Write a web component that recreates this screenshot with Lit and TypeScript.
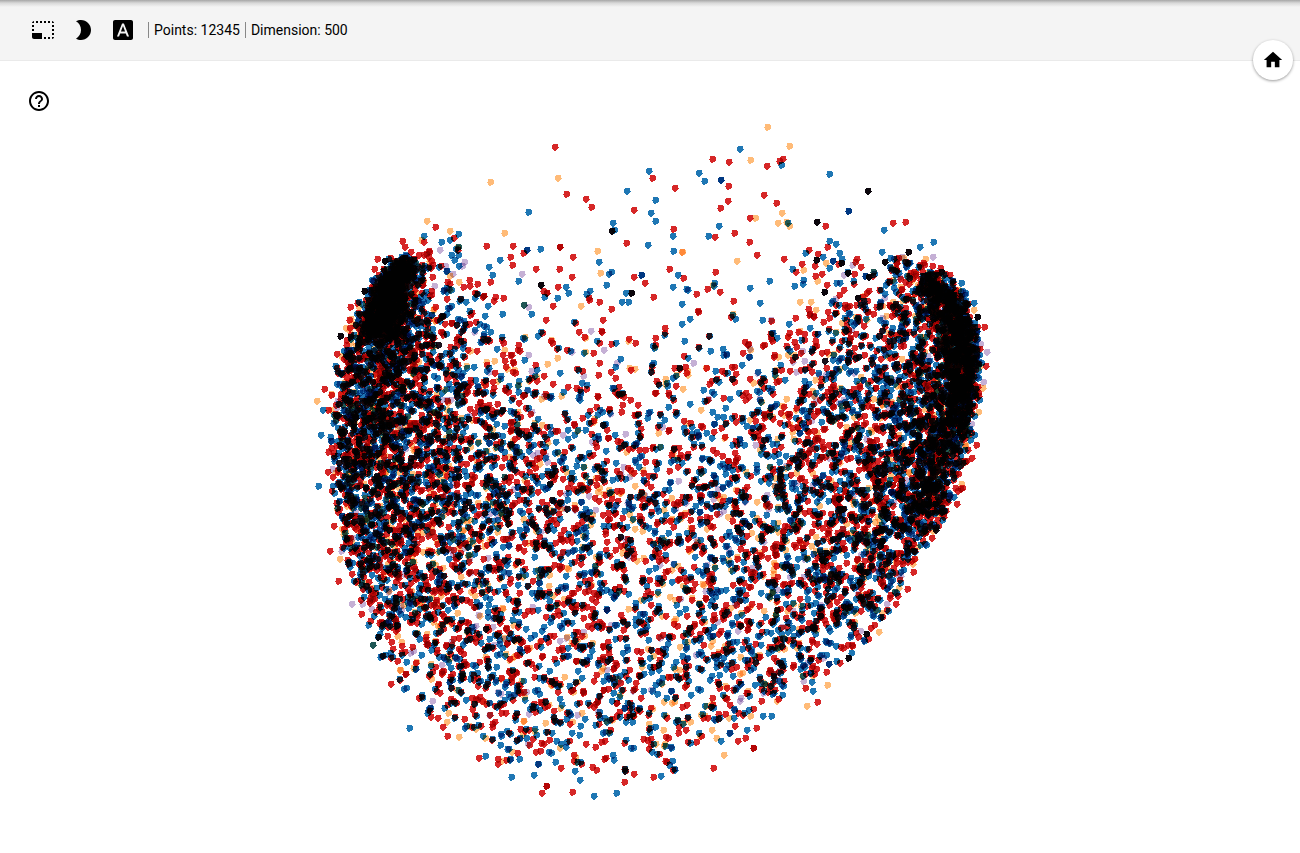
import { LitElement, html, css, svg } from "lit";
import { customElement, property, query } from "lit/decorators.js";

const ICONS = {
  labels3d:
    "M23 15h-2v2h2v-2zm0-4h-2v2h2v-2zm0 8h-2v2c1 0 2-1 2-2zM15 3h-2v2h2V3zm8 4h-2v2h2V7zm-2-4v2h2c0-1-1-2-2-2zM3 21h8v-6H1v4c0 1.1.9 2 2 2zM3 7H1v2h2V7zm12 12h-2v2h2v-2zm4-16h-2v2h2V3zm0 16h-2v2h2v-2zM3 3C2 3 1 4 1 5h2V3zm0 8H1v2h2v-2zm8-8H9v2h2V3zM7 3H5v2h2V3z",
  night:
    "M10 2c-1.82 0-3.53.5-5 1.35C7.99 5.08 10 8.3 10 12s-2.01 6.92-5 8.65C6.47 21.5 8.18 22 10 22c5.52 0 10-4.48 10-10S15.52 2 10 2z",
  font:
    "M9.93 13.5h4.14L12 7.98zM20 2H4c-1.1 0-2 .9-2 2v16c0 1.1.9 2 2 2h16c1.1 0 2-.9 2-2V4c0-1.1-.9-2-2-2zm-4.05 16.5l-1.14-3H9.17l-1.12 3H5.96l5.11-13h1.86l5.11 13h-2.09z",
  help:
    "M11 18h2v-2h-2v2zm1-16C6.48 2 2 6.48 2 12s4.48 10 10 10 10-4.48 10-10S17.52 2 12 2zm0 18c-4.41 0-8-3.59-8-8s3.59-8 8-8 8 3.59 8 8-3.59 8-8 8zm0-14c-2.21 0-4 1.79-4 4h2c0-1.1.9-2 2-2s2 .9 2 2c0 2-3 1.75-3 5h2c0-2.25 3-2.5 3-5 0-2.21-1.79-4-4-4z",
  home: "M10 20v-6h4v6h5v-8h3L12 3 2 12h3v8z",
};

const icon = (d: string) =>
  html`<svg viewBox="0 0 24 24" aria-hidden="true">${svg`<path d=${d}></path>`}</svg>`;

/* Point colours; overlapping points multiply. k, t, n and d are stacked points. */
const COLORS: Record<string, string> = {
  r: "#d62728",
  b: "#1f77b4",
  o: "#ffbb78",
  p: "#c5b0d5",
  k: "#0b060c",
  t: "#1f5755",
  n: "#003882",
  d: "#b40606",
};

/* Projection plane: cell size, first cell centre and the plane's centre. */
const CELL = 30;
const ORIGIN = { x: 330, y: 245 };
const CENTER = { x: 650, y: 457 };

/* Points per cell of the projection. */
const DENSITY: number[][] = [
  [0, 0, 6, 30, 8, 0, 0, 0, 0, 0, 0, 0, 0, 0, 0, 0, 0, 0, 0, 14, 16, 0, 0],
  [0, 10, 100, 45, 12, 4, 0, 0, 0, 0, 0, 0, 0, 0, 0, 0, 0, 0, 6, 34, 80, 15, 0],
  [5, 50, 190, 50, 18, 12, 1, 0, 0, 0, 0, 0, 0, 0, 0, 3, 10, 18, 24, 34, 80, 110, 0],
  [15, 100, 170, 60, 28, 20, 10, 7, 6, 5, 5, 5, 5, 7, 9, 15, 16, 22, 30, 40, 70, 180, 20],
  [24, 110, 120, 60, 38, 28, 15, 10, 8, 8, 8, 9, 10, 10, 11, 15, 24, 30, 36, 46, 80, 190, 25],
  [36, 115, 110, 60, 42, 34, 25, 17, 12, 13, 12, 11, 12, 13, 14, 22, 30, 36, 42, 52, 90, 170, 12],
  [40, 100, 96, 62, 46, 38, 32, 22, 15, 15, 15, 16, 17, 17, 20, 24, 32, 40, 46, 56, 100, 140, 5],
  [38, 92, 90, 60, 48, 42, 35, 27, 20, 20, 18, 18, 18, 19, 22, 27, 35, 42, 52, 70, 110, 80, 0],
  [34, 86, 80, 58, 48, 42, 36, 30, 27, 26, 24, 23, 23, 23, 27, 32, 38, 44, 56, 80, 130, 40, 0],
  [28, 76, 70, 54, 46, 40, 34, 32, 30, 30, 28, 28, 28, 28, 30, 34, 40, 48, 56, 90, 100, 10, 0],
  [15, 66, 66, 46, 40, 34, 30, 28, 26, 26, 26, 26, 26, 26, 28, 32, 40, 48, 56, 60, 36, 0, 0],
  [3, 50, 60, 42, 36, 30, 28, 26, 25, 24, 24, 24, 24, 25, 28, 34, 40, 50, 52, 36, 8, 0, 0],
  [0, 20, 50, 40, 32, 28, 26, 24, 23, 22, 22, 22, 22, 24, 28, 32, 40, 46, 40, 15, 0, 0, 0],
  [0, 5, 26, 34, 32, 28, 26, 24, 22, 22, 21, 20, 21, 25, 28, 31, 36, 34, 18, 0, 0, 0, 0],
  [0, 0, 8, 22, 28, 27, 25, 23, 23, 22, 21, 21, 22, 24, 26, 29, 30, 14, 0, 0, 0, 0, 0],
  [0, 0, 2, 12, 23, 25, 25, 22, 21, 21, 21, 21, 21, 21, 20, 18, 8, 0, 0, 0, 0, 0, 0],
  [0, 0, 0, 3, 12, 20, 22, 19, 18, 18, 17, 15, 15, 13, 9, 3, 0, 0, 0, 0, 0, 0, 0],
  [0, 0, 0, 0, 1, 6, 11, 14, 12, 9, 8, 9, 8, 4, 0, 0, 0, 0, 0, 0, 0, 0, 0],
];

/* Outline of the dense part of the cloud. */
const HULL: number[][] = [
  [425, 237], [395, 255], [370, 285], [353, 322], [341, 360], [332, 400], [328, 460], [334, 520],
  [350, 575], [368, 625], [390, 670], [410, 700], [445, 718], [480, 752], [515, 768], [560, 770],
  [600, 770], [660, 777], [700, 757], [742, 730], [765, 708], [812, 692], [840, 660], [880, 625],
  [908, 585], [926, 540], [953, 500], [968, 450], [976, 405], [982, 350], [970, 300], [945, 272],
  [920, 254], [885, 253], [860, 296], [790, 306], [700, 310], [560, 310], [500, 306], [480, 270],
  [460, 246],
];

/* Points apart from the dense part: colour, x, y. */
const OUTLIERS = `o767,127 r555,147 o789,146 b740,149 r712,159 r729,162 o750,160 r767,166 r779,161
r783,159 b781,165 b649,171 r652,178 b699,173 b704,181 n721,180 r728,186 r675,188 b829,174 k868,191
o490,182 o558,178 r566,194 r586,199 r591,207 b627,191 b655,200 r634,210 b528,212 b651,213 b655,221
r728,201 r720,208 r764,195 r776,203 o782,213 n848,211 b613,223 b614,230 k612,231 o504,233 r750,218
o755,218 o778,223 o786,222 b788,223 o789,226 k817,222 r825,226 b719,226 r734,233 r893,223 r905,222
b884,230 r673,229 b673,236 b708,236 r715,237 r749,242 r757,255 r486,246 r513,246 r523,253 n527,250
b540,249 d560,247 r626,243 b648,245 o597,251 r573,257 b673,251 o682,252 o682,252 b599,262 r510,257
b500,260 r512,265 b489,267 b492,275 p522,274 b518,281 r536,269 r559,269 r572,277 o600,273 b609,274
b611,272 r634,277 n641,275 r645,283 b606,285 b566,287 b568,293 r558,287 r669,269 b678,275 r683,278
b673,287 b686,289 b688,290 r715,272 o713,285 b714,283 b714,286 r707,289 r720,292 r696,294 b750,288
b769,281 o737,261 r733,301 b760,303 r653,297 k541,285 r543,291 d547,293 b544,297 d484,296 r495,297
r494,301 r503,298 b488,306 b557,298 r553,306 b586,294 b590,291 r589,300 r589,298 r599,302 b626,293
k631,293 b622,302 b628,302 o581,306 p528,307 t524,305 r611,309 b682,304 b805,253 r809,250 b829,241
b836,244 r827,247 r784,259 b792,269 r796,272 o803,270 r802,264 b803,280 b803,284 b794,286 r818,254
k816,260 b823,257 b839,253 o826,263 b829,268 n833,261 r838,264 r815,266 k841,263 b842,259 r855,262
r857,259 p852,265 r861,267 r815,276 r822,274 o817,281 p844,275 b847,272 k848,273 r854,274 r827,285
b836,283 b840,283 b853,281 r854,284 k824,292 r844,290 r839,295 k858,298 n865,276 k869,277 t873,272
r867,293 r867,301 o800,302 b831,303 r836,305 r856,305 o427,221 r435,227 o450,231 b458,234 r454,238
b441,242 b424,236 r402,241 r405,247 r377,259 k385,261 r374,269 b373,281 k364,291 b359,302 r350,307
o346,328 k340,336 r337,354 r324,389 o317,401 o331,394 b323,410 r328,410 b321,435 b318,486 r330,551
p341,551 o340,559 r338,581 p352,604 r361,614 t373,645 b380,657 r391,684 b409,728 o459,737 r447,736
r443,727 b427,713 r431,717 o448,713 r479,758 b485,756 r498,764 b511,777 b534,775 d546,786 r542,793
r572,792 b594,796 b616,793 b580,780 r624,782 r634,774 r653,777 b661,776 r713,768 o724,755 d753,748
r738,741 r745,738 b747,730 r756,728 b763,716 b771,716 o807,706 r817,702 b813,691 o827,685 r840,663
k848,658 o852,646 k866,634 o879,632 r882,617 r898,596 r907,589 r957,504 o961,484 r972,458 r976,445
p987,352 r984,327 n977,331 k977,317 b974,303 b933,242 b920,247 k908,252 p933,257 k941,272 r950,275
o958,290 r986,366 p983,382 o983,388 b970,440 b882,252 p528,355 p572,352 p462,266 p453,274
p464,262 o450,276 b458,247 r458,250 b451,255 b459,266 b890,258 k885,262 r898,258 b905,262`
  .split(/\s+/)
  .map((s) => {
    const [x, y] = s.slice(1).split(",").map(Number);
    return { c: s[0], x, y };
  });

type Point = { c: string; x: number; y: number };

/* Seeded generator, so that the cloud is the same on every load. */
function randomFrom(seed: number) {
  let a = seed;
  return () => {
    a = (a + 0x6d2b79f5) | 0;
    let t = Math.imul(a ^ (a >>> 15), 1 | a);
    t = (t + Math.imul(t ^ (t >>> 7), 61 | t)) ^ t;
    return ((t ^ (t >>> 14)) >>> 0) / 4294967296;
  };
}

function inside(x: number, y: number): boolean {
  let hit = false;
  for (let i = 0, j = HULL.length - 1; i < HULL.length; j = i++) {
    const [xi, yi] = HULL[i];
    const [xj, yj] = HULL[j];
    if (yi > y !== yj > y && x < ((xj - xi) * (y - yi)) / (yj - yi) + xi) hit = !hit;
  }
  return hit;
}

function buildCloud(): Point[] {
  const rnd = randomFrom(12345);
  const pick = () => {
    const v = rnd();
    return v < 0.43 ? "r" : v < 0.85 ? "b" : v < 0.96 ? "o" : "p";
  };
  const points: Point[] = [];
  DENSITY.forEach((row, j) =>
    row.forEach((n, i) => {
      for (let k = 0; k < n; k++) {
        const x = ORIGIN.x + i * CELL + (rnd() + rnd() - 1) * CELL;
        const y = ORIGIN.y + j * CELL + (rnd() + rnd() - 1) * CELL;
        /* A few points spill over the outline, so that its edge is ragged. */
        if (!inside(x + (rnd() - 0.5) * 10, y + (rnd() - 0.5) * 10)) continue;
        points.push({ c: pick(), x, y });
        if (rnd() < 0.3) {
          points.push({ c: pick(), x: x + rnd() * 4 - 2, y: y + rnd() * 4 - 2 });
          k++;
        }
      }
    }),
  );
  /* The two dense ridges. */
  const ridge = (path: number[][], count: number) => {
    for (let k = 0; k < count; k++) {
      const t = rnd() * (path.length - 1);
      const i = Math.floor(t);
      const f = t - i;
      const [x0, y0, w0] = path[i];
      const [x1, y1, w1] = path[i + 1];
      const w = w0 + (w1 - w0) * f;
      points.push({
        c: pick(),
        x: x0 + (x1 - x0) * f + (rnd() + rnd() - 1) * w,
        y: y0 + (y1 - y0) * f + (rnd() - 0.5) * 14,
      });
    }
  };
  ridge([[404, 264, 16], [392, 285, 20], [382, 310, 24], [376, 338, 26]], 650);
  ridge([[926, 282, 18], [946, 302, 20], [958, 330, 20], [963, 365, 20], [959, 405, 22]], 560);
  ridge([[959, 405, 20], [946, 440, 22], [934, 480, 24], [922, 515, 24]], 170);
  return points.concat(OUTLIERS);
}

@customElement("projector-plot")
export class ProjectorPlot extends LitElement {
  static styles = css`
    :host {
      display: block;
      min-width: 0;
      min-height: 0;
      overflow: hidden;
    }
    .canvas {
      display: block;
    }
  `;

  @query("canvas") private canvas!: HTMLCanvasElement;
  private points = buildCloud();
  private observer = new ResizeObserver(() => this.draw());

  firstUpdated() {
    this.draw();
    this.observer.observe(this);
  }

  disconnectedCallback() {
    super.disconnectedCallback();
    this.observer.disconnect();
  }

  private draw() {
    const w = this.clientWidth;
    const h = this.clientHeight;
    if (!w || !h) return;
    this.canvas.width = w;
    this.canvas.height = h;
    const ctx = this.canvas.getContext("2d")!;
    ctx.fillStyle = "#fff";
    ctx.fillRect(0, 0, w, h);
    ctx.globalCompositeOperation = "multiply";
    const dx = Math.round(w / 2) - CENTER.x;
    const dy = Math.round(h / 2) - CENTER.y;
    this.points.forEach((p, i) => {
      const x = Math.round(p.x + dx) - 3;
      const y = Math.round(p.y + dy) - 3;
      const side = i % 2;
      ctx.fillStyle = COLORS[p.c];
      ctx.beginPath();
      ctx.rect(x + 1, y, 5, 1);
      ctx.rect(x + 1 - side, y + 1, 6, 2);
      ctx.rect(x, y + 3, 7, 1);
      ctx.rect(x + 1 - side, y + 4, 6, 1);
      ctx.rect(x + 1, y + 5, 5 - side, 1);
      ctx.rect(x + 2, y + 6, 2, 1);
      ctx.fill();
    });
  }

  render() {
    return html`<canvas class="canvas" role="img" aria-label="Scatter plot"></canvas>`;
  }
}

@customElement("app-root")
export class AppRoot extends LitElement {
  static styles = css`
    :host {
      display: flex;
      flex-direction: column;
      height: 100vh;
      position: relative;
      background: #fff;
      color: #000;
      font: 14px/16px Roboto, sans-serif;
    }
    .toolbar {
      display: flex;
      align-items: center;
      height: 60px;
      padding-left: 23px;
      background: linear-gradient(#a6a6a6, #d8d8d8 3px, #f4f4f4 7px);
      border-bottom: 1px solid #eaeaea;
    }
    .icon-button {
      display: flex;
      box-sizing: border-box;
      width: 40px;
      height: 40px;
      padding: 8px;
      border: 0;
      background: none;
      color: inherit;
      cursor: pointer;
    }
    svg {
      display: block;
      width: 100%;
      height: 100%;
      fill: currentColor;
    }
    .stats {
      display: flex;
      gap: 5px;
      margin-left: 5px;
    }
    .stat {
      padding-left: 5px;
      border-left: 1px solid #888;
    }
    .stage {
      flex: 1;
      display: grid;
      min-height: 0;
    }
    .stage > * {
      grid-area: 1 / 1;
    }
    .help {
      z-index: 1;
      margin: 20px 0 0 19px;
    }
    .home {
      position: absolute;
      top: 40px;
      right: 7px;
      padding: 9px;
      border-radius: 50%;
      background: #fff;
      box-shadow: 0 1px 3px rgba(0, 0, 0, 0.4);
      z-index: 2;
    }
  `;

  @property({ type: Number }) points = 12345;
  @property({ type: Number }) dimension = 500;

  render() {
    return html`
      <header class="toolbar">
        <button class="icon-button" aria-label="Select data range">${icon(ICONS.labels3d)}</button>
        <button class="icon-button" aria-label="Toggle night mode">${icon(ICONS.night)}</button>
        <button class="icon-button" aria-label="Toggle labels">${icon(ICONS.font)}</button>
        <div class="stats">
          <span class="stat">Points: ${this.points}</span>
          <span class="stat">Dimension: ${this.dimension}</span>
        </div>
      </header>
      <main class="stage">
        <projector-plot></projector-plot>
        <button class="icon-button help" aria-label="Help">${icon(ICONS.help)}</button>
      </main>
      <button class="icon-button home" aria-label="Reset view">${icon(ICONS.home)}</button>
    `;
  }
}
